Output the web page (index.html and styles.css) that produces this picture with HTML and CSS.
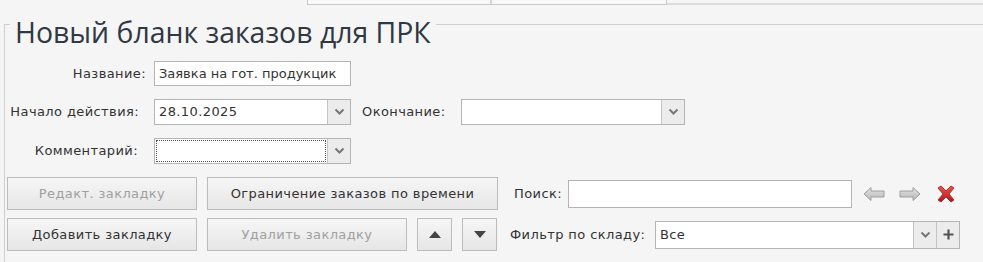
FILE: index.html
```html
<!DOCTYPE html>
<html lang="ru">
<head>
    <meta charset="UTF-8">
    <title>Новый бланк заказов для ПРК</title>
    <link rel="stylesheet" href="styles.css">
</head>
<body>
    <div class="tab-strip">
        <span class="tab tab-first"></span>
        <span class="tab tab-second"></span>
        <span class="tab-rest"></span>
    </div>

    <fieldset class="group">
        <legend class="group-title">Новый бланк заказов для ПРК</legend>

        <div class="form-row row-name">
            <label class="field-label lbl-name">Название:</label>
            <div class="text-box box-name">Заявка на гот. продукцик</div>
        </div>

        <div class="form-row row-dates">
            <label class="field-label lbl-start">Начало действия:</label>
            <div class="combo box-start">
                <span class="combo-text">28.10.2025</span>
                <span class="combo-btn"><svg width="11" height="8" viewBox="0 0 11 8"><path d="M1.5 1.5 L5.5 5.5 L9.5 1.5" fill="none" stroke="#777" stroke-width="2"/></svg></span>
            </div>
            <label class="field-label lbl-end">Окончание:</label>
            <div class="combo box-end">
                <span class="combo-text"></span>
                <span class="combo-btn"><svg width="11" height="8" viewBox="0 0 11 8"><path d="M1.5 1.5 L5.5 5.5 L9.5 1.5" fill="none" stroke="#777" stroke-width="2"/></svg></span>
            </div>
        </div>

        <div class="form-row row-comment">
            <label class="field-label lbl-comment">Комментарий:</label>
            <div class="combo box-comment">
                <span class="combo-text focused"></span>
                <span class="combo-btn"><svg width="11" height="8" viewBox="0 0 11 8"><path d="M1.5 1.5 L5.5 5.5 L9.5 1.5" fill="none" stroke="#777" stroke-width="2"/></svg></span>
            </div>
        </div>

        <div class="button-row row-edit">
            <button class="btn btn-wide" disabled>Редакт. закладку</button>
            <button class="btn btn-time">Ограничение заказов по времени</button>
            <label class="field-label lbl-search">Поиск:</label>
            <div class="text-box box-search"></div>
            <span class="nav-icon icon-back">
                <svg width="22" height="16" viewBox="0 0 22 16">
                    <defs>
                        <linearGradient id="arrowGrey" x1="0" y1="0" x2="0" y2="1">
                            <stop offset="0" stop-color="#e2e2e2"/>
                            <stop offset="1" stop-color="#b8b8b8"/>
                        </linearGradient>
                    </defs>
                    <path d="M1 8 L8 1.5 L8 5 L21 5 L21 11 L8 11 L8 14.5 Z" fill="url(#arrowGrey)" stroke="#9e9e9e" stroke-width="1" stroke-linejoin="round"/>
                </svg>
            </span>
            <span class="nav-icon icon-forward">
                <svg width="22" height="16" viewBox="0 0 22 16">
                    <path d="M21 8 L14 1.5 L14 5 L1 5 L1 11 L14 11 L14 14.5 Z" fill="url(#arrowGrey)" stroke="#9e9e9e" stroke-width="1" stroke-linejoin="round"/>
                </svg>
            </span>
            <span class="nav-icon icon-clear">
                <svg width="20" height="18" viewBox="0 0 20 18">
                    <defs>
                        <linearGradient id="crossRed" x1="0" y1="0" x2="0" y2="1">
                            <stop offset="0" stop-color="#f0544e"/>
                            <stop offset="1" stop-color="#b5141a"/>
                        </linearGradient>
                    </defs>
                    <path d="M2 3 L5 1 L10 6 L15 1 L18 3 L13 9 L18 15 L15 17 L10 12 L5 17 L2 15 L7 9 Z" fill="url(#crossRed)" stroke="#9c1a1a" stroke-width="0.8" stroke-linejoin="round"/>
                </svg>
            </span>
        </div>

        <div class="button-row row-add">
            <button class="btn btn-wide">Добавить закладку</button>
            <button class="btn btn-remove" disabled>Удалить закладку</button>
            <button class="btn btn-arrow"><svg width="12" height="7" viewBox="0 0 12 7"><path d="M0 7 L6 0 L12 7 Z" fill="#444"/></svg></button>
            <button class="btn btn-arrow"><svg width="12" height="7" viewBox="0 0 12 7"><path d="M0 0 L6 7 L12 0 Z" fill="#444"/></svg></button>
            <label class="field-label lbl-filter">Фильтр по складу:</label>
            <div class="combo box-filter">
                <span class="combo-text">Все</span>
                <span class="combo-btn"><svg width="11" height="8" viewBox="0 0 11 8"><path d="M1.5 1.5 L5.5 5.5 L9.5 1.5" fill="none" stroke="#777" stroke-width="2"/></svg></span>
                <span class="combo-btn plus-btn"><svg width="11" height="11" viewBox="0 0 11 11"><path d="M5.5 0.5 V10.5 M0.5 5.5 H10.5" stroke="#555" stroke-width="2.2"/></svg></span>
            </div>
        </div>
    </fieldset>
</body>
</html>
```

FILE: styles.css
```css
body {
    margin: 0;
    background: #f5f5f5;
    font-family: "DejaVu Sans", Verdana, sans-serif;
    font-size: 13px;
    letter-spacing: 0.4px;
    color: #333;
    overflow: hidden;
}

/* remains of the tab strip above the group box */
.tab-strip {
    display: flex;
    height: 5px;
}

.tab {
    border: 1px solid #c8c8c8;
    border-top: none;
    background: #f8f8f8;
}

.tab-first {
    margin-left: 307px;
    width: 182px;
    border-right: 2px solid #d4d4d4;
}

.tab-second {
    width: 174px;
    border-left: none;
}

.tab-rest {
    flex: 1;
    border-bottom: 2px solid #dcdcdc;
}

.group {
    margin: -3px 0 0 4px;
    padding: 0;
    border: none;
    border-top: 1px solid #cfcfcf;
    border-left: 1px solid #cfcfcf;
    min-height: 270px;
}

.group-title {
    margin-left: 5px;
    padding: 15px 5px 0;
    font-family: "Open Sans", "Noto Sans", sans-serif;
    font-size: 28.4px;
    line-height: 30px;
    letter-spacing: 0;
    color: #2f3843;
}

.form-row {
    display: flex;
    align-items: center;
    height: 25px;
}

.row-name {
    margin-top: 14px;
}

.row-dates {
    margin-top: 13px;
}

.row-comment {
    margin-top: 14px;
}

.field-label {
    white-space: nowrap;
}

.lbl-name,
.lbl-start,
.lbl-comment {
    box-sizing: border-box;
    width: 149px;
    text-align: right;
}

.lbl-name {
    padding-right: 8px;
}

.lbl-start {
    padding-right: 15px;
}

.lbl-comment {
    padding-right: 16px;
}

.lbl-end {
    width: 99px;
    margin-left: 11px;
}

.text-box {
    box-sizing: border-box;
    height: 25px;
    border: 1px solid #b4b4b4;
    background: #fff;
    padding: 0 4px;
    line-height: 23px;
    white-space: nowrap;
    overflow: hidden;
}

.box-name {
    width: 197px;
    letter-spacing: 0;
}

.combo {
    display: flex;
    box-sizing: border-box;
    height: 26px;
    border: 1px solid #b4b4b4;
    background: #fff;
}

.combo-text {
    flex: 1;
    padding: 0 4px;
    line-height: 24px;
    white-space: nowrap;
}

.combo-text.focused {
    margin: 1px;
    border: 1px dotted #555;
}

.combo-btn {
    display: flex;
    align-items: center;
    justify-content: center;
    width: 22px;
    background: #ececec;
    border-left: 1px solid #c4c4c4;
}

.box-start,
.box-comment {
    width: 197px;
}

.box-end {
    width: 224px;
}

.button-row {
    display: flex;
    align-items: center;
    height: 33px;
    padding-left: 2px;
}

.row-edit {
    margin-top: 14px;
}

.row-add {
    margin-top: 8px;
}

.btn {
    box-sizing: border-box;
    height: 33px;
    margin-right: 10px;
    border: 1px solid #bcbcbc;
    border-radius: 0;
    background: linear-gradient(#f6f6f6, #e6e6e6);
    font-family: inherit;
    font-size: 13px;
    letter-spacing: 0.4px;
    color: #333;
    padding: 0;
}

.btn:disabled {
    color: #a0a0a0;
}

.btn-wide {
    width: 190px;
}

.btn-time {
    width: 291px;
    margin-right: 9px;
}

.btn-remove {
    width: 200px;
}

.btn-arrow {
    width: 35px;
    display: flex;
    align-items: center;
    justify-content: center;
}

.lbl-search {
    width: 54px;
    margin-left: 7px;
}

.box-search {
    width: 284px;
    height: 28px;
}

.nav-icon {
    display: flex;
}

.icon-back {
    margin-left: 11px;
}

.icon-forward {
    margin-left: 14px;
}

.icon-clear {
    margin-left: 15px;
}

.lbl-filter {
    width: 145px;
    margin-left: 3px;
}

.box-filter {
    width: 305px;
    height: 28px;
}

.box-filter .combo-text {
    line-height: 26px;
}
```
